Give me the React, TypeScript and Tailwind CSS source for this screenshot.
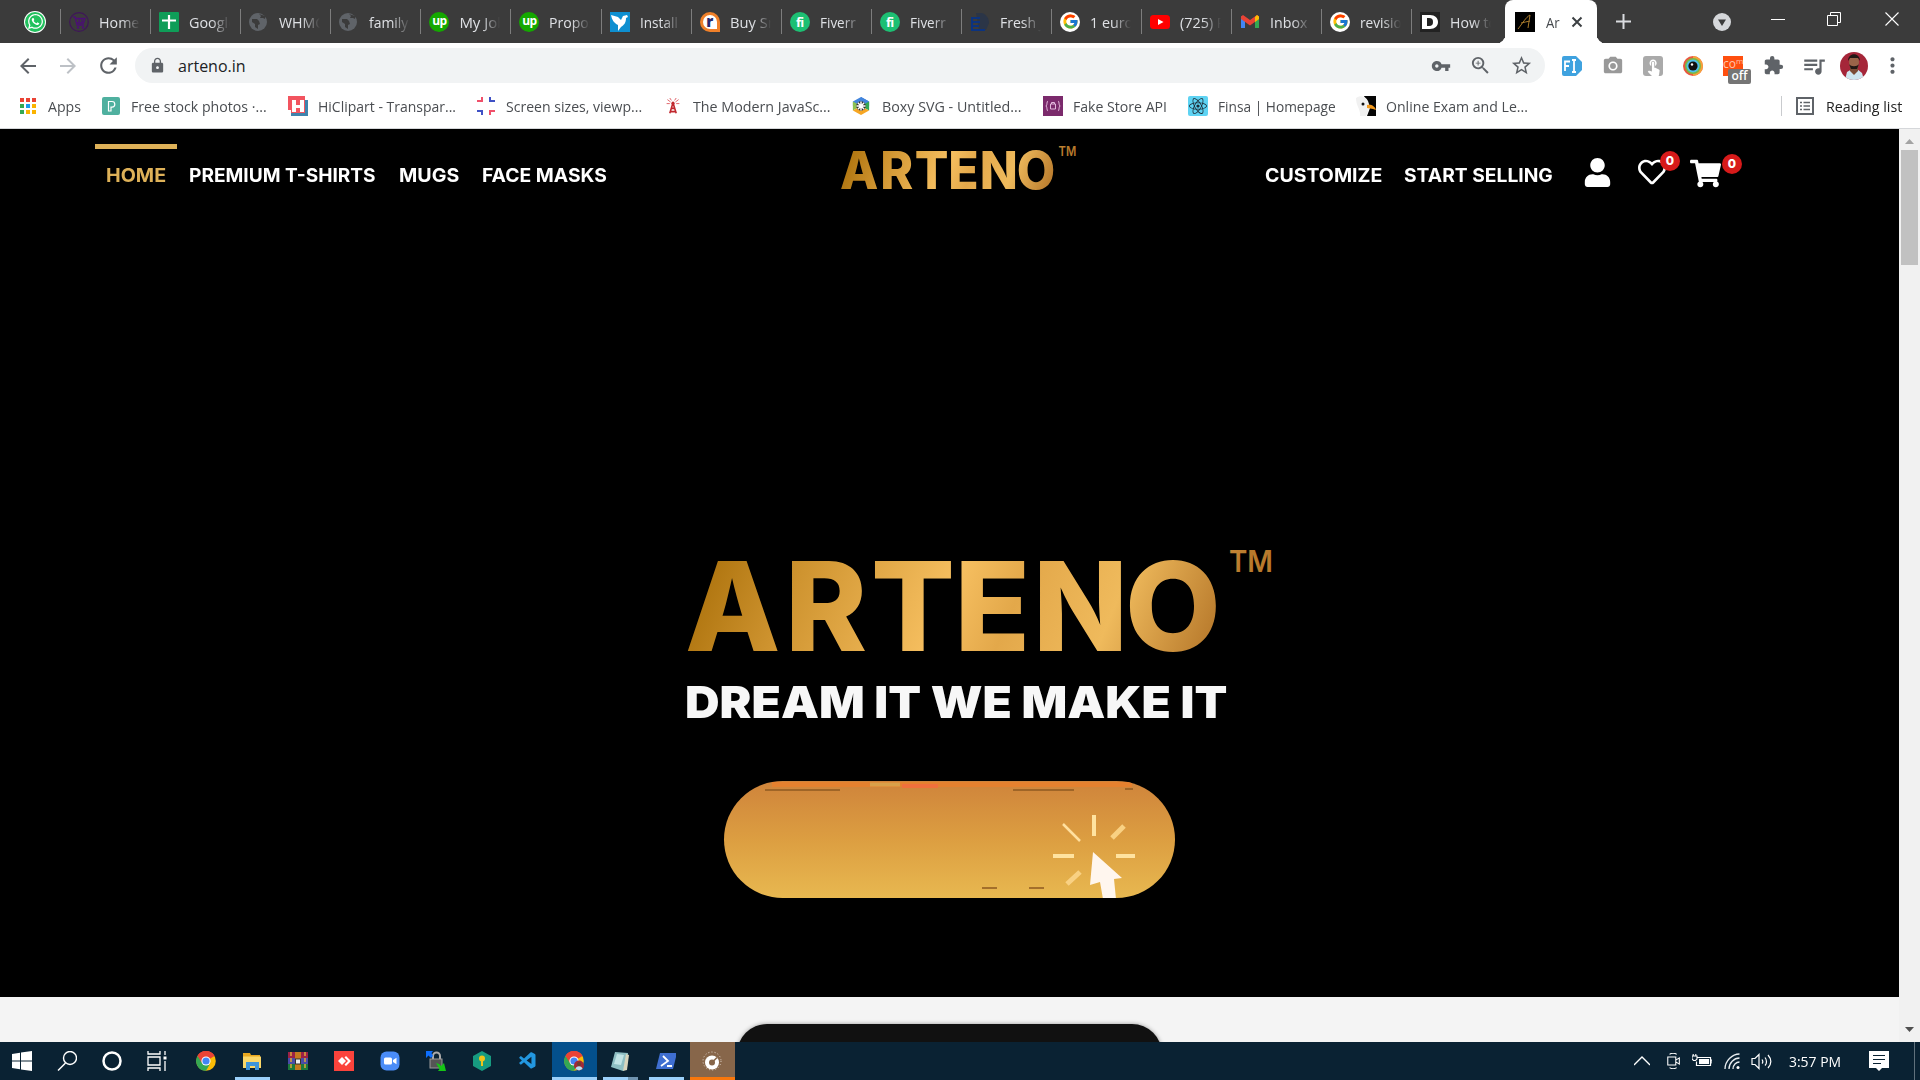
import React, { useLayoutEffect, useRef } from "react";
import { FaUser, FaRegHeart, FaShoppingCart, FaWhatsapp, FaReact } from "react-icons/fa";
import { MdStarBorder, MdVpnKey, MdExtension, MdQueueMusic, MdLock, MdRefresh, MdMoreVert, MdArrowBack, MdArrowForward, MdZoomIn, MdCameraAlt, MdPublic, MdTouchApp } from "react-icons/md";
import { VscVscode } from "react-icons/vsc";
import { FcGoogle } from "react-icons/fc";

/* Text squeezed or stretched horizontally to an exact width. */
function Fit({ w, children, className = "" }: { w: number; children: React.ReactNode; className?: string }) {
  const ref = useRef<HTMLSpanElement>(null);
  useLayoutEffect(() => {
    const el = ref.current;
    if (el) el.style.transform = `scaleX(${w / el.offsetWidth})`;
  }, [w]);
  return (
    <span className={`block shrink-0 whitespace-nowrap ${className}`} style={{ width: w }}>
      <span ref={ref} className="inline-block origin-left">{children}</span>
    </span>
  );
}

const Svg = ({ children, s = 20, vb = "0 0 20 20" }: { children: React.ReactNode; s?: number; vb?: string }) => (
  <svg width={s} height={s} viewBox={vb} className="block shrink-0" fill="none">{children}</svg>
);

const Upwork = () => (
  <span className="flex size-5 items-center justify-center rounded-full bg-[#14a800] pb-0.5 text-[12px] font-bold tracking-tighter text-white">up</span>
);
const Fiverr = () => (
  <span className="flex size-5 items-center justify-center rounded-full bg-[#1dbf73] text-[13px] font-bold tracking-tighter text-white">fi</span>
);
const Google = () => (
  <span className="flex size-5 items-center justify-center rounded-full bg-white"><FcGoogle size={17} /></span>
);
const Globe = () => (
  <Svg>
    <circle cx="9" cy="10" r="9" fill="#5f6368" />
    <path d="M3 7h5l2 2 1 3-2 1v4l-3-2v-3l-3-2zM10 2l2 2-1 2h3l2 1V4z" fill="#3b3b3b" />
  </Svg>
);

const tabs: { t: string; w: number; i: React.ReactNode }[] = [
  { t: "Home", w: 40, i: <Svg><circle cx="10" cy="10" r="9.3" stroke="#3f1659" strokeWidth="1.2" /><path d="M4 5h2l2 8h7M7 6.5h9l-1.5 4.500H8M10 6v5M13 6v5" stroke="#4b0f74" strokeWidth="1.300" /><circle cx="9" cy="15.500" r="1.200" fill="#4b0f74" /><circle cx="14" cy="15.500" r="1.200" fill="#4b0f74" /></Svg> },
  { t: "Google", w: 47, i: <Svg><rect width="20" height="20" rx="1" fill="#0f9d58" /><path d="M10 3v14M3 8.500h14" stroke="#fff" strokeWidth="2.200" /></Svg> },
  { t: "WHMCS", w: 53, i: <Globe /> },
  { t: "family", w: 39, i: <Globe /> },
  { t: "My Job", w: 47, i: <Upwork /> },
  { t: "Propos", w: 47, i: <Upwork /> },
  { t: "Install", w: 38, i: <Svg><rect width="20" height="20" fill="#0e8fd0" /><path d="M1 3l7 2 3 3 2-4 4-1 1 2-2 1c0 5-2 7-5 9l-3 4 0-6c-4-2-6-5-7-10z" fill="#fff" /></Svg> },
  { t: "Buy Sm", w: 51, i: <span className="flex size-5 items-center justify-center rounded-full rounded-br-sm border-[3px] border-[#f08029] bg-white pb-0.5 text-[15px] font-extrabold text-[#27276b]">r</span> },
  { t: "Fiverr", w: 36, i: <Fiverr /> },
  { t: "Fiverr", w: 36, i: <Fiverr /> },
  { t: "Fresh J", w: 44, i: <Svg><path d="M6 1h6c5 2 7 6 7 10l-3 7H9z" fill="#2b3547" /><path d="M1 5h9v2H3v2h7v2H3v2h6v2H3v2h12v2H1z" fill="#0b3380" /></Svg> },
  { t: "1 euro", w: 43, i: <Google /> },
  { t: "(725) P", w: 46, i: <Svg><rect y="3" width="20" height="14" rx="3.500" fill="#f00" /><path d="M8 7l5.500 3L8 13z" fill="#fff" /></Svg> },
  { t: "Inbox", w: 37, i: <Svg><path d="M1 4v12h4V8z" fill="#4285f4" /><path d="M19 4v12h-4V8z" fill="#34a853" /><path d="M1 4.500L3 3l7 5 7-5 2 1.500V7l-9 6.500L1 7z" fill="#ea4335" /><path d="M15 5l2-2 2 1.500V7l-4 3z" fill="#fbbc04" /></Svg> },
  { t: "revision", w: 50, i: <Google /> },
  { t: "How to", w: 47, i: <Svg><rect width="20" height="20" fill="#222" /><path fillRule="evenodd" d="M2 3h8c5 0 8 3 8 7s-3 7-8 7H2zM7 6v8h2c3 0 4-1.500 4-4s-1-4-4-4z" fill="#fff" /></Svg> },
];

const bookmarks: { t: string; w: number; gap: number; i: React.ReactNode; mr: number }[] = [
  { t: "Apps", w: 33, gap: 12, mr: 21, i: <Svg s={16} vb="0 0 16 16">{["#ea4335", "#ea4335", "#ea4335", "#34a853", "#1a9bf0", "#fbb300", "#34a853", "#fbb300", "#fbb300"].map((c, k) => <rect key={k} x={(k % 3) * 6} y={Math.floor(k / 3) * 6} width="4" height="4" fill={c} />)}</Svg> },
  { t: "Free stock photos ·...", w: 136, gap: 11, mr: 21, i: <Svg s={18} vb="0 0 18 18"><rect width="18" height="18" rx="2" fill="#4fb09f" /><path d="M6.500 14V4.500H10a2.800 2.800 0 010 5.600H9V14z" stroke="#fff" strokeWidth="1.200" /></Svg> },
  { t: "HiClipart - Transpar...", w: 138, gap: 10, mr: 20, i: <Svg><rect x="3" y="4" width="17" height="16" fill="#3f83ad" /><path d="M0 0h17v17H3v-3H0z" fill="#f2545f" /><path d="M4 4h4v5h4V4h4v12h-4v-4H8v4H4z" fill="#fff" /></Svg> },
  { t: "Screen sizes, viewp...", w: 136, gap: 10, mr: 23, i: <Svg><path d="M6 1v4H1M14 19v-4h5" stroke="#f0506a" strokeWidth="2" /><path d="M14 1v4h5M6 19v-4H1" stroke="#3f51c5" strokeWidth="2" /></Svg> },
  { t: "The Modern JavaSc...", w: 138, gap: 12, mr: 21, i: <Svg s={16} vb="0 0 16 20"><path d="M8 6L4 19M8 6l4 13M5.500 13h5M5 17h6M7 9h2" stroke="#c1272d" strokeWidth="2" /><circle cx="8" cy="6.500" r="2" fill="#c1272d" /><path d="M5 5L1 2M4 7H0M11 5l4-3M12 7h4M6 3L4 0M10 3l2-3" stroke="#d9434a" /></Svg> },
  { t: "Boxy SVG - Untitled...", w: 140, gap: 12, mr: 21, i: <Svg s={18} vb="0 0 18 20"><path d="M9 0l9 5H9z" fill="#2f6fd0" /><path d="M9 0L0 5v5l9-2 9 2V5z" fill="#4285dd" /><path d="M0 5v10l9-5z" fill="#8cc152" /><path d="M18 5v10l-9-5z" fill="#34a853" /><path d="M0 15l9 5 9-5-9-5z" fill="#f6a623" /><circle cx="9" cy="10" r="5.300" fill="#333" /><path d="M9 5v10M4 10h10M5.500 6.500l7 7M12.500 6.500l-7 7" stroke="#fff" strokeWidth="1.600" /></Svg> },
  { t: "Fake Store API", w: 94, gap: 10, mr: 21, i: <Svg><rect width="20" height="20" fill="#7b2a6c" /><path d="M5 5C3.500 5 4.500 9 3 10c1.500 1 .5 5 2 5M15 5c1.500 0 .5 4 2 5-1.500 1-.5 5-2 5M7.500 8h5v5h-5zM8.500 8V6.500h3V8" stroke="#e3b9dc" /></Svg> },
  { t: "Finsa | Homepage", w: 118, gap: 10, mr: 20, i: <span className="flex size-5 items-center justify-center rounded-[2px] bg-[#5ed3f3]"><FaReact size={18} color="#1d2b36" /></span> },
  { t: "Online Exam and Le...", w: 142, gap: 10, mr: 0, i: <Svg><path d="M8 0h12v20H11l3-8z" fill="#050505" /><path d="M0 2c4-3 10-2 12 3l2 6-4 9H4C5 14 0 10 0 2z" fill="#f1f1f1" /><circle cx="7" cy="8" r="1.500" fill="#111" /><path d="M11 9c4-1 8 1 9 5l-3-1-6-1z" fill="#f39a1d" /></Svg> },
];

const Chrome = ({ badge = false }: { badge?: boolean }) => (
  <Svg>
    <circle cx="10" cy="10" r="9.800" fill="#fbbc05" />
    <path d="M10 10L1.500 5A9.800 9.800 0 0118.500 5z" fill="#ea4335" />
    <path d="M10 10L1.500 5A9.800 9.800 0 0010 19.800l3.500-6z" fill="#34a853" />
    <path d="M9 5h9.500a9.800 9.800 0 00-17 0L6 12z" fill="#ea4335" />
    <circle cx="10" cy="10" r="4.600" fill="#fff" />
    <circle cx="10" cy="10" r="3.600" fill="#4285f4" />
    {badge && <><circle cx="15" cy="14.500" r="5" fill="#a22a38" /><path d="M11.500 18a3.600 3.600 0 017 0l-3.500 1.500z" fill="#bcdff0" /><circle cx="15" cy="13" r="2" fill="#6b4030" /></>}
  </Svg>
);

const taskIcons: { i: React.ReactNode; bg?: string; bar?: string }[] = [
  { i: <Chrome /> },
  { bar: "w-[35px] bg-[#9bd0fa]", i: <Svg><path d="M1 2h7l1 2h9v13H1z" fill="#e9a81f" /><path d="M1 5.500h18V17H1z" fill="#fbd768" /><path d="M4 11h13v8h-4v-4H8v4H4z" fill="#3d94d9" /></Svg> },
  { i: <Svg><rect y="1" width="20" height="6" fill="#9c2146" /><rect y="7" width="20" height="6" fill="#4a4ba8" /><rect y="13" width="20" height="6" fill="#1c7a3c" /><path d="M3 1v18M17 1v18" stroke="#dba63a" strokeWidth="1.500" strokeDasharray="4 2" /><rect x="7" y="1" width="6" height="18" fill="#c57a1f" /><rect x="7.500" y="8" width="5" height="5" fill="#eee" stroke="#333" /></Svg> },
  { i: <Svg><rect width="20" height="20" fill="#fb433c" /><path d="M4 10l4-4 4 4-4 4z" fill="#fff" /><path d="M10.500 6.500L12 5l5 5-5 5-1.500-1.500L14 10z" fill="#fff" /></Svg> },
  { i: <Svg><rect x=".5" y=".5" width="19" height="19" rx="6" fill="#4a8cf7" /><rect x="4" y="6.500" width="8" height="7" rx="1.500" fill="#fff" /><path d="M13 9l3.500-2.300v6.600L13 11z" fill="#fff" /></Svg> },
  { i: <Svg><path d="M7 9V5a3.500 3.500 0 017 0v4" stroke="#aaa" strokeWidth="2" /><rect x="4" y="8" width="12" height="9" fill="#555" stroke="#999" /><path d="M0 0h7L5.500 2 7 5 5 7 2.500 4.500 0 7z" fill="#0d6efd" /><path d="M10 12l3 1 2 2 3-3 2 8h-8l1.500-2z" fill="#16c516" /></Svg> },
  { i: <Svg><path d="M10 0l9 5v10l-9 5-9-5V5z" fill="#179b80" /><circle cx="10" cy="7.500" r="3" fill="#f0c419" /><path d="M9 9h2v6H9z" fill="#f0c419" /></Svg> },
  { i: <VscVscode size={20} color="#2297e0" /> },
  { bg: "bg-[#04508c]", bar: "w-full bg-[#9bd0fa]", i: <Chrome badge /> },
  { bar: "w-[35px] bg-[#9bd0fa] border-r-[10px] border-[#7094b0]", i: <Svg><path d="M5 1l13 1-2 16-3 2L1 16z" fill="#8ebfc4" /><path d="M16 3l3 1-2 15-4 1z" fill="#d9d5bd" /><path d="M7 3l7 1-3 10-7-1z" fill="#c2e4e6" /></Svg> },
  { bar: "w-[35px] bg-[#9bd0fa]", i: <Svg><path d="M4 2h17l-4 16H0z" fill="#3f6fd1" /><path d="M7 5l5 5-7 5M11 15h5" stroke="#fff" strokeWidth="1.800" /></Svg> },
  { bg: "bg-[#87664a]", bar: "w-full bg-[#f9770c]", i: <Svg><circle cx="10" cy="11.500" r="7" fill="#fff" /><circle cx="10" cy="11.500" r="3" fill="#87664a" /><path d="M11 10.500l4-4" stroke="#87664a" strokeWidth="1.600" /><circle cx="10" cy="10" r="9" stroke="#e8ddd4" strokeDasharray="1 2.200" /></Svg> },
];

function Tab({ t, w, i }: { t: string; w: number; i: React.ReactNode }) {
  return (
    <div className="flex h-full w-[90.1px] shrink-0 items-center border-white/0">
      <i className="h-[25px] w-px bg-[#7d7d7d]" />
      <span className="ml-2 shrink-0">{i}</span>
      <span className="ml-2.5 w-[41px] overflow-hidden text-[#dfe1e5] [mask-image:linear-gradient(to_right,black_55%,transparent)]">
        <Fit w={w}>{t}</Fit>
      </span>
    </div>
  );
}

function Badge({ className }: { className: string }) {
  return <span className={`absolute flex size-5 items-center justify-center rounded-full bg-[#d71a1a] text-[12px] font-extrabold text-white ${className}`}>0</span>;
}

function LogoStops() {
  return (
    <>
      <stop offset="0" stopColor="#a66c06" />
      <stop offset=".22" stopColor="#cf9430" />
      <stop offset=".5" stopColor="#f6bf60" />
      <stop offset=".62" stopColor="#e3a84a" />
      <stop offset=".8" stopColor="#efba5c" />
      <stop offset="1" stopColor="#b87a2c" />
    </>
  );
}

/* Gold word mark; every letter has its own x position. */
function Wordmark({ id, className }: { id: string; className: string }) {
  return (
    <svg viewBox="685 545 590 110" preserveAspectRatio="none" className={className}>
      <defs>
        <linearGradient id={id} gradientUnits="userSpaceOnUse" x1="700" y1="520" x2="1180" y2="720"><LogoStops /></linearGradient>
      </defs>
      <g fill={`url(#${id})`} fontFamily="Inter">
        <text y="651" x="685 785 871 954.500 1033 1125" fontSize="124" fontWeight="800">ARTENO</text>
        <text y="572" x="1229" fontSize="30" fontWeight="600" textLength="44" lengthAdjust="spacingAndGlyphs">TM</text>
      </g>
    </svg>
  );
}

export default function App() {
  return (
    <div className="flex h-[1080px] w-[1920px] flex-col overflow-hidden bg-white font-['Open_Sans',sans-serif] text-[15px] leading-5">
      {/* tab strip */}
      <div className="flex h-[43px] shrink-0 items-center bg-[#3b3b3b]">
        <div className="flex w-[60px] shrink-0 pl-[25px]">
          <span className="flex size-5 items-center justify-center rounded-full bg-[#22c15e] ring-1 ring-white"><FaWhatsapp size={17} color="#fff" /></span>
        </div>
        {tabs.map((t, k) => <Tab key={k} {...t} />)}
        <div className="relative ml-[3.400px] flex h-full w-[92px] shrink-0 items-center rounded-t-lg bg-white pl-[10px] before:absolute before:-left-2 before:bottom-0 before:size-2 before:rounded-br-lg before:shadow-[3px_3px_0_white] after:absolute after:-right-2 after:bottom-0 after:size-2 after:rounded-bl-lg after:shadow-[-3px_3px_0_white]">
          <Svg><rect width="20" height="20" fill="#000" /><path d="M3 17C7 12 11 5 15 3l-2 13M6 11c3-1 6-1 9-2" stroke="#a97b2c" /></Svg>
          <Fit w={14} className="ml-[11px] text-[#45494d]">Ar</Fit>
          <span className="ml-[11px]"><Svg s={12} vb="0 0 12 12"><path d="M1.500 1.500l9 9M10.500 1.500l-9 9" stroke="#3c4043" strokeWidth="2" /></Svg></span>
        </div>
        <span className="ml-[19px]"><Svg s={15} vb="0 0 15 15"><path d="M7.500 0v15M0 7.500h15" stroke="#dadce0" strokeWidth="2" /></Svg></span>
        <span className="ml-[82px]"><Svg s={18} vb="0 0 18 18"><circle cx="9" cy="9" r="9" fill="#d5d7da" /><path d="M5 6.500h8L9 13z" fill="#3b3b3b" /></Svg></span>
        <span className="mb-1.5 ml-10"><Svg s={14} vb="0 0 14 14"><path d="M0 7.500h14" stroke="#fff" /></Svg></span>
        <span className="mb-1.5 ml-[42px]"><Svg s={14} vb="0 0 14 14"><path d="M.5 3.500h10v10H.5zM3.500 3V.5h10v10H11" stroke="#fff" /></Svg></span>
        <span className="mb-1.5 ml-[44px]"><Svg s={14} vb="0 0 14 14"><path d="M.5.500l13 13M13.500.5l-13 13" stroke="#fff" strokeWidth="1.100" /></Svg></span>
      </div>

      {/* toolbar */}
      <div className="flex h-[45px] shrink-0 items-center pl-4 text-[#5f6368]">
        <MdArrowBack size={24} />
        <MdArrowForward size={24} className="ml-4 text-[#bdc1c6]" />
        <MdRefresh size={25} className="ml-4" />
        <div className="ml-[14px] flex h-[35px] w-[1410px] items-center rounded-full bg-[#f1f3f4] pl-[14px] pr-[12px]">
          <MdLock size={17} />
          <Fit w={68} className="ml-[12px] text-[16px] text-[#202124]">arteno.in</Fit>
          <div className="ml-auto flex items-center gap-[18px]">
            <MdVpnKey size={20} /><MdZoomIn size={23} /><MdStarBorder size={23} />
          </div>
        </div>
        <span className="ml-[17px]"><Svg><path d="M2 0h12l6 6v8l-6 6H2a2 2 0 01-2-2V2a2 2 0 012-2z" fill="#3fa2df" /><path d="M3 15V5.500h5M3 10h4M10 4h4M12 4v12M10 16h4" stroke="#fff" strokeWidth="1.800" /></Svg></span>
        <MdCameraAlt size={22} className="ml-[20px] text-[#999]" />
        <span className="ml-[19px] flex size-5 items-end justify-center rounded-[3px] bg-[#aaa]"><MdTouchApp size={19} color="#fff" /></span>
        <span className="ml-[20px]"><Svg><circle cx="10" cy="10" r="10" fill="#e9573f" /><path d="M10 0a10 10 0 010 20z" fill="#f6a13a" /><circle cx="10" cy="10" r="8" fill="#7bb942" /><circle cx="10" cy="10" r="6.500" fill="#4fc1e9" /><circle cx="10" cy="10" r="4.600" fill="#111" /><circle cx="9" cy="8.500" r="1.200" fill="#fff" /></Svg></span>
        <div className="relative ml-[20px] h-5 w-5 bg-[#ff4f0f] text-[12px] leading-3 text-[#ffc5ad]">
          <span className="block pt-0.5">co<sup className="text-[8px]">m</sup></span>
          <span className="absolute left-[5px] top-[13px] flex h-[15px] w-[23px] items-center justify-center rounded-[2px] bg-[#757575] pb-px text-[12px] font-semibold text-white">off</span>
        </div>
        <MdExtension size={21} className="ml-[20px]" />
        <MdQueueMusic size={26} className="ml-[17px]" />
        <span className="ml-[13px]"><svg width="28" height="28" viewBox="0 0 28 28"><clipPath id="av"><circle cx="14" cy="14" r="14" /></clipPath><g clipPath="url(#av)"><path fill="#a52639" d="M0 0h28v28H0z" /><path d="M5 28l2-8 5-3h5l5 4 2 7z" fill="#cfe6ef" /><path d="M10 14h8v5l-4 4-4-4z" fill="#7c4c36" /><ellipse cx="14" cy="10" rx="5" ry="7" fill="#9a6449" /><path d="M8 9c0-9 12-9 12 0l-2-3h-8zM9 12c2 3 8 3 10 0l-2 5h-6z" fill="#221815" /></g></svg></span>
        <MdMoreVert size={25} className="ml-[12px]" />
      </div>

      {/* bookmarks */}
      <div className="flex h-[40px] shrink-0 items-center pl-5 text-[#4a4d51]">
        {bookmarks.map((b) => (
          <div key={b.t} className="flex items-center pb-1" style={{ marginRight: b.mr }}>
            {b.i}
            <span style={{ marginLeft: b.gap }}><Fit w={b.w}>{b.t}</Fit></span>
          </div>
        ))}
        <div className="ml-auto flex items-center pb-1 pr-[18px]">
          <i className="mr-[14px] h-5 w-px bg-[#c9cbce]" />
          <Svg s={18} vb="0 0 18 18"><path d="M1 1h16v16H1z" stroke="#5f6368" strokeWidth="2" /><path d="M4 5.500h2M4 9h2M4 12.500h2M7.500 5.500H14M7.500 9H14M7.500 12.500H14" stroke="#5f6368" strokeWidth="1.600" /></Svg>
          <Fit w={76} className="ml-3 text-[#222]">Reading list</Fit>
        </div>
      </div>
      <div className="h-px shrink-0 bg-[#d5d7da]" />

      {/* page */}
      <div className="flex h-[913px] shrink-0">
        <div className="flex w-[1899px] flex-col bg-[#f4f4f4]">
          <div className="h-[868px] bg-black">
            <header className="flex h-[100px] items-start font-['Inter',sans-serif] text-[19px] font-bold text-white">
              <nav className="flex gap-[23px] pl-[95px] pt-[15px]">
                <div className="-mr-[11px] w-[82px] border-t-[5px] border-[#deb158] pl-[11px] pt-[17px] text-[#deb158]"><Fit w={60}>HOME</Fit></div>
                <Fit w={187} className="pt-[22px]">PREMIUM T-SHIRTS</Fit>
                <Fit w={60} className="pt-[22px]">MUGS</Fit>
                <Fit w={125} className="pt-[22px]">FACE MASKS</Fit>
              </nav>
              <Wordmark id="logo-small" className="ml-[233px] mt-[16px] h-[46px] w-[237px]" />
              <nav className="ml-[188px] flex gap-[22px] pt-[37px]">
                <Fit w={117}>CUSTOMIZE</Fit>
                <Fit w={149}>START SELLING</Fit>
              </nav>
              <div className="ml-[30px] flex gap-[28px] pt-[29px]">
                <FaUser size={29} className="-mr-0.5" />
                <span className="relative"><FaRegHeart size={28} /><Badge className="-top-[7px] left-[22px]" /></span>
                <span className="relative -ml-1"><FaShoppingCart size={31} /><Badge className="-top-[4px] left-[32px]" /></span>
              </div>
            </header>

            <section className="flex flex-col pl-[685px] pt-[316px]">
              <Wordmark id="logo-big" className="h-[110px] w-[590px]" />
              <Fit w={542} className="mt-[27px] font-['Inter',sans-serif] text-[44px] font-black leading-[40px] text-[#f7f7f7]">DREAM IT WE MAKE IT</Fit>
              <div className="ml-[39px] mt-[59px] h-[117px] w-[451px] overflow-hidden rounded-full bg-gradient-to-b from-[#cf843b] via-[#dc9e41] to-[#e8b850]">
                <svg width="451" height="117" viewBox="724 781 451 117" fill="none">
                  <path d="M772 784.500h360" stroke="#e5812f" strokeWidth="5" />
                  <path d="M870 784.500h30" stroke="#d9a04a" strokeWidth="4" />
                  <path d="M902 786h36" stroke="#f0703c" strokeWidth="4" />
                  <path d="M765 790h75M1013 790h61M982 888h15M1029 888h15M1125 789h8" stroke="#8f5920" strokeWidth="1.500" />
                  <path d="M1094 815v21M1053 856h21M1116 856h19" stroke="#ffe3a0" strokeWidth="4" />
                  <path d="M1063 824l17 17" stroke="#ffe0a0" strokeWidth="2.500" />
                  <path d="M1112 838l12-12M1067 884l13-12" stroke="#f9d183" strokeWidth="5" />
                  <path d="M1093 852l-3 33 10-3 3 17h13l-2-20 8-1z" fill="#fff6ee" />
                </svg>
              </div>
            </section>
          </div>
          <div className="flex h-[45px] justify-center overflow-hidden pt-[27px]">
            <div className="h-[60px] w-[425px] rounded-[30px] bg-[#111] shadow-[0_0_4px_#999]" />
          </div>
        </div>
        <div className="flex w-[21px] flex-col items-center justify-between bg-[#f1f1f1] pb-2 pt-2">
          <div className="flex flex-col items-center gap-[7px]">
            <Svg s={9} vb="0 0 9 5"><path d="M0 5L4.500 0 9 5z" fill="#a3a3a3" /></Svg>
            <div className="-mt-[3px] h-[115px] w-[17px] bg-[#c1c1c1]" />
          </div>
          <Svg s={9} vb="0 0 9 5"><path d="M0 0h9L4.500 5z" fill="#505050" /></Svg>
        </div>
      </div>

      {/* taskbar */}
      <div className="flex h-[38px] shrink-0 items-center bg-[#0a2233] text-white">
        <div className="flex w-[183px] shrink-0 items-center gap-[25px] pl-3">
          <Svg><path d="M0 3l8-1.200V9.500H0zM9 1.600L20 0v9.500H9zM0 10.500h8v7.700L0 17zM9 10.500h11V20L9 18.400z" fill="#fff" /></Svg>
          <Svg><circle cx="13" cy="7" r="6.500" stroke="#fff" strokeWidth="1.400" /><path d="M8.500 12L1 19.500" stroke="#fff" strokeWidth="1.500" /></Svg>
          <Svg><circle cx="10" cy="10" r="8.500" stroke="#fff" strokeWidth="2.500" /></Svg>
          <Svg><path d="M1 0v3h12V0M1 20v-3h12v3M1 6h12v8H1zM18 0v4M18 10v10" stroke="#fff" strokeWidth="1.300" /><path d="M16.500 5.500h3v3h-3z" fill="#fff" /></Svg>
        </div>
        {taskIcons.map((t, k) => (
          <div key={k} className="flex h-full w-[46px] shrink-0 justify-center">
            <div className={`flex h-full w-[45px] flex-col items-center justify-between pt-[9px] ${t.bg ?? ""}`}>
              {t.i}
              <i className={`h-[3px] ${t.bar ?? ""}`} />
            </div>
          </div>
        ))}
        <div className="ml-auto flex items-center">
          <Svg s={16} vb="0 0 16 16"><path d="M0 12l8-8 8 8" stroke="#fff" strokeWidth="1.300" /></Svg>
          <span className="ml-4"><Svg s={16} vb="0 0 16 18"><path d="M1 4.500h9v9H1zM10 8l4-2.500v7L10 10M3 1.500c2-1.500 6-1.500 8 0M3 16.500c2 1.500 6 1.500 8 0" stroke="#fff" strokeWidth="1.200" /></Svg></span>
          <span className="ml-[10px]"><Svg><path d="M5 6.500h13.500v8H4.500v-4M18.500 9H20v3.500" stroke="#fff" strokeWidth="1.200" /><path d="M7 8h10v5H7z" fill="#fff" /><path d="M0 5h5v3L3.500 9.500h-2L0 8zM1.200 3v2M3.800 3v2" stroke="#fff" strokeWidth="1.100" fill="#0a2233" /></Svg></span>
          <span className="ml-[12px]"><Svg s={16} vb="0 0 16 16"><path d="M1 16C1 8 8 1 15.500 1M5 16C5 10 10 5 15.500 5M9 16c0-4 3-7 6.500-7" stroke="#e8edf0" strokeWidth="1.300" /><circle cx="14" cy="14.500" r="1.500" fill="#fff" /></Svg></span>
          <span className="ml-[11px]"><Svg s={21} vb="0 0 21 20"><path d="M1 7h3l4-4v14l-4-4H1zM11 8c1 1.500 1 3 0 4M14 6c2 2.500 2 6 0 8M17 3.500c3.500 4 3.500 9 0 13" stroke="#fff" strokeWidth="1.200" /></Svg></span>
          <Fit w={52} className="ml-[17px]">3:57 PM</Fit>
          <span className="ml-[28px]"><Svg><path d="M0 0h20v17h-7l-3 3-3-3H0z" fill="#fff" /><path d="M4 4.500h12M4 8.500h12M4 12.500h8" stroke="#0a2233" strokeWidth="1.200" /></Svg></span>
          <i className="ml-[25px] mr-[5px] h-[38px] w-px bg-[#60717c]" />
        </div>
      </div>
    </div>
  );
}
